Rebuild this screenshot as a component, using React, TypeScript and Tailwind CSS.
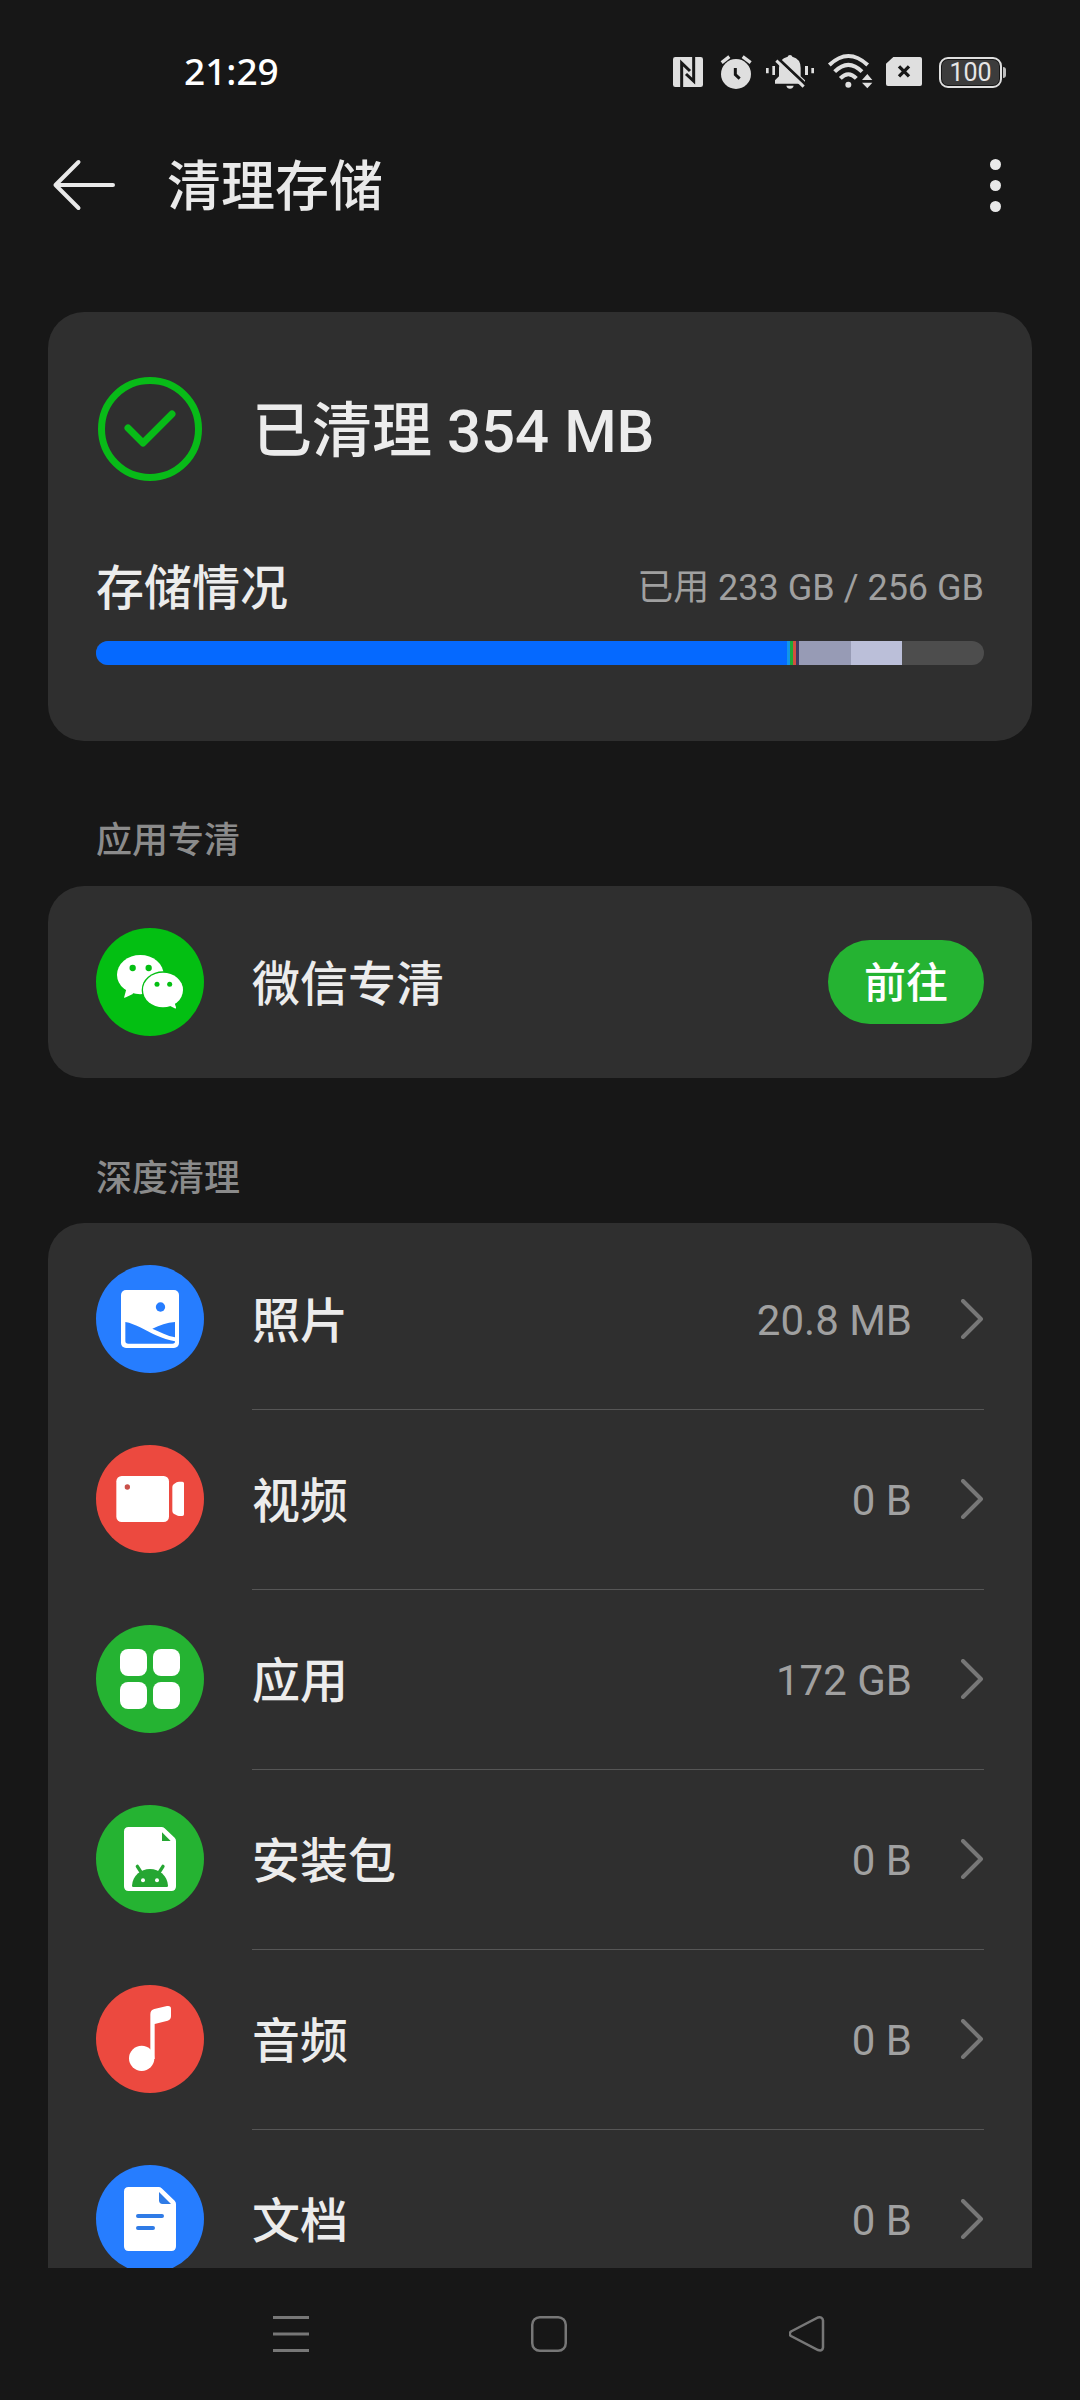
import type { ReactNode } from "react";

const usage = [
  { width: 691, color: "#0569ff" },
  { width: 3, color: "#1296e8" },
  { width: 3, color: "#1fa83a" },
  { width: 3, color: "#d2503f" },
  { width: 3, color: "#3f3a63" },
  { width: 52, color: "#979bb5" },
  { width: 51, color: "#bbbfd9" },
];

const items = [
  { label: "照片", value: "20.8 MB", icon: <PhotoIcon /> },
  { label: "视频", value: "0 B", icon: <VideoIcon /> },
  { label: "应用", value: "172 GB", icon: <AppsIcon /> },
  { label: "安装包", value: "0 B", icon: <PackageIcon /> },
  { label: "音频", value: "0 B", icon: <AudioIcon /> },
  { label: "文档", value: "0 B", icon: <DocumentIcon /> },
];

/** Round coloured badge, all glyphs are drawn on a 324 grid. */
function Badge({ color, children }: { color: string; children: ReactNode }) {
  return (
    <svg className="size-[108px] shrink-0" viewBox="0 0 324 324" fill="#fff">
      <circle cx="162" cy="162" r="162" fill={color} />
      {children}
    </svg>
  );
}

function WechatIcon() {
  return (
    <Badge color="#03bf12">
      <ellipse cx="133" cy="140" rx="70" ry="59" />
      <path d="M92 180 L84 209 Q86 210 90 208 L112 197 Z" />
      <ellipse cx="201" cy="186" rx="64" ry="56" fill="#03bf12" />
      <ellipse cx="201" cy="186" rx="60" ry="52" />
      <path d="M218 232 L236 241 Q241 243 240 238 L234 220 Z" />
      <g fill="#03bf12">
        <circle cx="110" cy="120" r="9.5" />
        <circle cx="158" cy="120" r="9.5" />
        <circle cx="183" cy="169" r="7.5" />
        <circle cx="221" cy="169" r="7.5" />
      </g>
    </Badge>
  );
}

function PhotoIcon() {
  return (
    <Badge color="#267dff">
      <rect x="75" y="75" width="174" height="174" rx="15" />
      <g fill="#267dff">
        <circle cx="193.500" cy="126" r="14" />
        <path d="M88 171 C118 176 150 197 180 211 C200 220 218 225 237 229 Q238 236 229 236 H97 Q88 236 88 228 Z" />
        <path d="M169 191 C192 180 212 173 237 171 V217 C214 213 192 201 169 191 Z" />
      </g>
    </Badge>
  );
}

function VideoIcon() {
  return (
    <Badge color="#ec493f">
      <rect x="61" y="93" width="158" height="138" rx="16" />
      <circle cx="94" cy="126" r="8" fill="#c9504a" />
      <path d="M229 126 Q229 121 233 118 L242 112 Q245 110 249 110 H259 Q264 110 264 115 V208 Q264 213 259 213 H249 Q245 213 242 211 L233 206 Q229 203 229 198 Z" />
    </Badge>
  );
}

function AppsIcon() {
  return (
    <Badge color="#25b332">
      <rect x="72" y="72" width="81" height="81" rx="24" />
      <rect x="171" y="72" width="81" height="81" rx="24" />
      <rect x="72" y="171" width="81" height="81" rx="24" />
      <rect x="171" y="171" width="81" height="81" rx="24" />
    </Badge>
  );
}

function PackageIcon() {
  return (
    <Badge color="#25b332">
      <path d="M98 66 H196 Q202 66 206 70 L236 98 Q240 102 240 108 V244 Q240 258 226 258 H98 Q84 258 84 244 V80 Q84 66 98 66 Z" />
      <g fill="#25a632">
        <path d="M198 82 L224 108 H198 Z" />
        <path d="M108 242 C110 212 134 192 162 192 C190 192 214 212 216 242 Q216 246 212 246 H112 Q108 246 108 242 Z" />
        <path d="M124 184 L136 203 M201 184 L189 203" stroke="#25a632" strokeWidth="10" strokeLinecap="round" />
      </g>
      <circle cx="141" cy="226" r="6" />
      <circle cx="183" cy="226" r="6" />
    </Badge>
  );
}

function AudioIcon() {
  return (
    <Badge color="#ec493f">
      <circle cx="137" cy="220" r="38" />
      <path d="M163 88 Q163 75 175 72 L213 63 Q225 61 225 71 V94 Q225 104 215 107 L176 117 V222 H163 Z" />
    </Badge>
  );
}

function DocumentIcon() {
  return (
    <Badge color="#267dff">
      <path d="M98 66 H188 Q193 66 197 70 L236 107 Q240 111 240 117 V244 Q240 258 226 258 H98 Q84 258 84 244 V80 Q84 66 98 66 Z" />
      <path d="M189 81 L225 117 H200 Q189 117 189 106 Z" fill="#2f7be6" />
      <path d="M126 153 H198 M126 189 H171" stroke="#2f7be6" strokeWidth="12" strokeLinecap="round" />
    </Badge>
  );
}

function StatusBar() {
  return (
    <div className="flex h-[120px] items-start pt-[52px] pr-[74px] pl-[184px]">
      <span className="mr-auto font-['Noto_Sans'] text-[37px] leading-[38px] font-medium text-white">21:29</span>

      {/* nfc */}
      <svg className="h-10 w-[30px]" viewBox="99 66 90 120" fill="none">
        <rect x="99" y="81" width="90" height="90" rx="7" fill="#dfdfdf" />
        <path d="M125 171 V99 L150 123 M161 81 V153 L138 132" stroke="#171717" strokeWidth="9" />
      </svg>
      {/* alarm */}
      <svg className="ml-[17px] h-10 w-8" viewBox="240 66 96 120" fill="none">
        <circle cx="288" cy="132" r="45" fill="#dfdfdf" />
        <path d="M245 98 L268 80 M308 80 L332 98" stroke="#dfdfdf" strokeWidth="10" />
        <path d="M286 114 V134 L299 146" stroke="#171717" strokeWidth="9" />
      </svg>
      {/* muted bell */}
      <svg className="ml-[13px] h-10 w-[50px]" viewBox="375 66 150 120" fill="#dfdfdf">
        <path d="M405 161 V151 L417 139 V114 Q417 86 443 80 Q444 75 450 75 Q456 75 457 80 Q482 86 482 114 V139 L495 151 V161 Z" />
        <path d="M439 167 H461 Q459 176 450 176 Q441 176 439 167 Z" />
        <path d="M404 76 L506 172" stroke="#171717" strokeWidth="9" />
        <path d="M409 92 L491 170" stroke="#dfdfdf" strokeWidth="9" />
        <path d="M378 114 h8 v16 h-8 Z M397 108 h8 v27 h-8 Z M495 108 h9 v27 h-9 Z M514 114 h8 v16 h-8 Z" />
      </svg>
      {/* wifi */}
      <svg className="ml-3 h-10 w-[46px]" viewBox="561 66 138 120" fill="none">
        <g stroke="#dfdfdf" strokeWidth="12">
          <path d="M568 105 Q625 51 683 105" />
          <path d="M584 125 Q625 84 666 125" />
          <path d="M601 145 Q625 120 649 145" />
        </g>
        <g fill="#dfdfdf">
          <circle cx="625" cy="164" r="9" />
          <path d="M666 150 L682 132 L697 150 Z M666 158 H697 L682 175 Z" />
        </g>
      </svg>
      {/* no sim */}
      <svg className="ml-[13px] h-10 w-9" viewBox="738 66 108 120" fill="none">
        <path d="M760 81 H840 Q846 81 846 87 V162 Q846 168 840 168 H744 Q738 168 738 162 V101 Z" fill="#dfdfdf" />
        <path d="M777 109 L807 139 M807 109 L777 139" stroke="#171717" strokeWidth="10" />
      </svg>
      {/* battery */}
      <div className="ml-[17px] flex h-10 items-center gap-px">
        <div className="flex h-[31px] w-[63px] rounded-[9px] border-[2.5px] border-[#dfdfdf] p-px">
          <span className="flex flex-1 items-center justify-center rounded-[6px] bg-[#3c3c3c] text-[25px] leading-none text-[#e6e6e6]">
            100
          </span>
        </div>
        <div className="h-[11px] w-[3px] rounded-r-sm bg-[#bdbdbd]" />
      </div>
    </div>
  );
}

function Header() {
  return (
    <header className="flex h-[130px] items-center pr-[79px] pl-[52px] text-[#e9e9e9]">
      <svg className="h-[52px] w-16" viewBox="0 0 64 52" fill="none" stroke="currentColor" strokeWidth="4" strokeLinecap="round" strokeLinejoin="round">
        <path d="M61 26 H3.500 M26.500 3 L3.500 26 L26.500 49" />
      </svg>
      <h1 className="ml-[51px] pt-[6px] text-[54px] leading-none font-medium">清理存储</h1>
      <div className="ml-auto flex flex-col gap-[10px]">
        <i className="size-[11px] rounded-full bg-[#e9e9e9]" />
        <i className="size-[11px] rounded-full bg-[#e9e9e9]" />
        <i className="size-[11px] rounded-full bg-[#e9e9e9]" />
      </div>
    </header>
  );
}

function StorageCard() {
  return (
    <section className="mt-[62px] h-[429px] rounded-[36px] bg-[#2f2f2f] px-12 pt-[63px]">
      <div className="flex items-center">
        <svg className="size-[108px]" viewBox="0 0 108 108" fill="none" stroke="#08bb18">
          <circle cx="54" cy="54" r="48.500" strokeWidth="7" />
          <path d="M32 53 L47 68 L76 39" strokeWidth="7" strokeLinecap="round" strokeLinejoin="round" />
        </svg>
        <h2 className="ml-12 pt-[5px] text-[60px] leading-none font-medium">已清理 354 MB</h2>
      </div>
      <div className="mt-[78px] flex h-[52px] items-center justify-between">
        <span className="pt-[4px] text-[48px] leading-none font-medium">存储情况</span>
        <span className="pt-[2px] text-[36px] leading-none text-[#a0a0a0]">已用 233 GB / 256 GB</span>
      </div>
      <div className="mt-7 flex h-6 overflow-hidden rounded-full bg-[#4d4d4d]">
        {usage.map((part) => (
          <div key={part.color} style={{ width: part.width, backgroundColor: part.color }} />
        ))}
      </div>
    </section>
  );
}

function SectionTitle({ children }: { children: ReactNode }) {
  return <h3 className="px-12 text-[36px] leading-[40px] font-medium text-[#8b8b8b]">{children}</h3>;
}

function NavBar() {
  return (
    <nav className="flex flex-1 items-start pt-12 pl-[273px] text-[#777]">
      <svg className="size-9" viewBox="0 0 36 36" stroke="currentColor" strokeWidth="3">
        <path d="M0 1.500 H36 M0 18 H36 M0 34.500 H36" />
      </svg>
      <svg className="ml-[222px] size-9" viewBox="0 0 36 36" fill="none" stroke="currentColor" strokeWidth="2.500">
        <rect x="1.250" y="1.250" width="33.500" height="33.500" rx="7.500" />
      </svg>
      <svg className="ml-[222px] size-9" viewBox="0 0 36 36" fill="none" stroke="currentColor" strokeWidth="2.500">
        <path d="M2 15.500 L29 1.500 Q33.500 0.500 34 4.500 V31.500 Q33.500 35.500 29 34 L2 20 Q-0.500 18 2 15.500 Z" />
      </svg>
    </nav>
  );
}

export default function App() {
  return (
    <div className="flex h-[2400px] w-[1080px] flex-col overflow-hidden bg-[#171717] font-[Roboto,'Noto_Sans_CJK_SC',sans-serif] text-[#ececec]">
      <StatusBar />
      <Header />
      <main className="flex h-[2018px] shrink-0 flex-col overflow-hidden px-12">
        <StorageCard />

        <div className="mt-[80px] mb-[25px]">
          <SectionTitle>应用专清</SectionTitle>
        </div>
        <section className="flex h-48 shrink-0 items-center rounded-[36px] bg-[#2f2f2f] px-12">
          <WechatIcon />
          <span className="ml-12 pt-[5px] text-[48px] leading-none font-medium">微信专清</span>
          <button className="ml-auto h-[84px] w-[156px] rounded-full bg-[#25b332] pt-[4px] text-[42px] leading-none font-medium text-white">
            前往
          </button>
        </section>

        <div className="mt-[81px] mb-[24px]">
          <SectionTitle>深度清理</SectionTitle>
        </div>
        <section className="flex-1 overflow-hidden rounded-t-[36px] bg-[#2f2f2f] px-12 pt-[6px]">
          {items.map((item, i) => (
            <div key={item.label} className="flex h-[180px] items-center">
              {item.icon}
              <div
                className={`ml-12 flex h-full flex-1 items-center border-t ${i === 0 ? "border-transparent" : "border-[#565656]"}`}
              >
                <span className="pt-[4px] text-[48px] leading-none font-medium">{item.label}</span>
                <span className="ml-auto pt-[2px] text-[42px] leading-none text-[#a0a0a0]">{item.value}</span>
                <svg className="ml-12 h-[42px] w-6" viewBox="0 0 24 42" fill="none" stroke="#777" strokeWidth="4" strokeLinecap="round" strokeLinejoin="round">
                  <path d="M3 2 L21 20 L3 38" />
                </svg>
              </div>
            </div>
          ))}
        </section>
      </main>
      <NavBar />
    </div>
  );
}
